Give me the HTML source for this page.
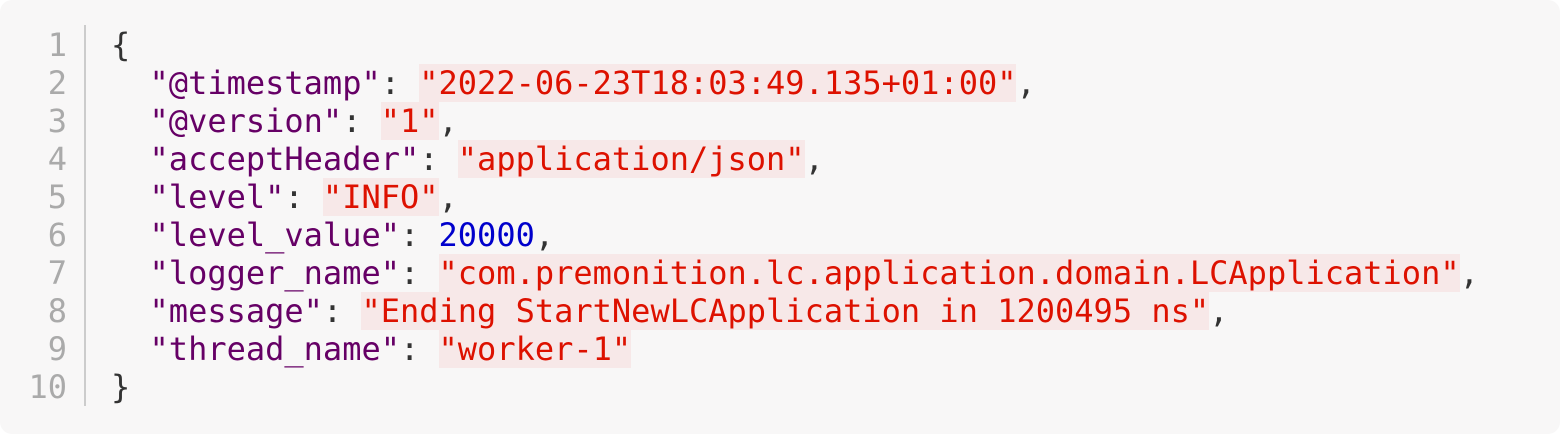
<!DOCTYPE html>
<html><head><style>
body{margin:0;background:#fff;}
.box{position:absolute;left:0;top:0;width:1560px;height:434px;background:#f8f7f7;border-radius:12px;}
.nums{position:absolute;left:0;top:26px;width:67px;text-align:right;color:#aaa;}
.bar{position:absolute;left:84px;top:25px;width:2px;height:381px;background:#ccc;}
.code{position:absolute;left:111px;top:26px;color:#333;}
.nums,.code{font-family:"DejaVu Sans Mono","Liberation Mono",monospace;font-size:32px;line-height:38px;white-space:pre;}
.k{color:#660066}.s{color:#dd1100;background:#f7e8e8}.n{color:#0000cc}
</style></head><body>
<div class="box">
<div class="nums">1
2
3
4
5
6
7
8
9
10</div>
<div class="bar"></div>
<div class="code">{
  <span class="k">"@timestamp"</span>: <span class="s">"2022-06-23T18:03:49.135+01:00"</span>,
  <span class="k">"@version"</span>: <span class="s">"1"</span>,
  <span class="k">"acceptHeader"</span>: <span class="s">"application/json"</span>,
  <span class="k">"level"</span>: <span class="s">"INFO"</span>,
  <span class="k">"level_value"</span>: <span class="n">20000</span>,
  <span class="k">"logger_name"</span>: <span class="s">"com.premonition.lc.application.domain.LCApplication"</span>,
  <span class="k">"message"</span>: <span class="s">"Ending StartNewLCApplication in 1200495 ns"</span>,
  <span class="k">"thread_name"</span>: <span class="s">"worker-1"</span>
}</div>
</div>
</body></html>
